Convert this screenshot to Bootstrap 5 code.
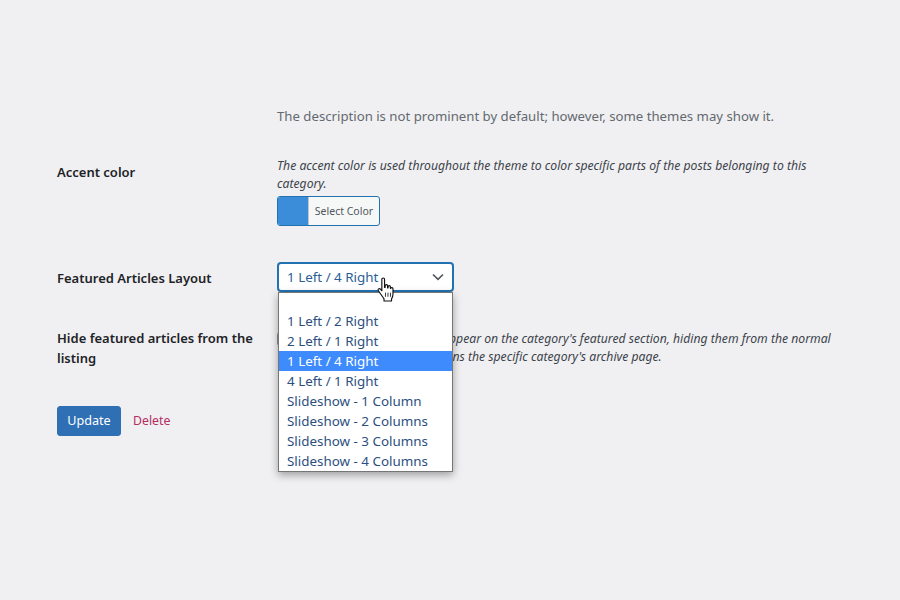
<!DOCTYPE html>
<html lang="en"><head><meta charset="utf-8"><title>Edit category</title>
<link href="https://cdn.jsdelivr.net/npm/bootstrap@5.3.0/dist/css/bootstrap.min.css" rel="stylesheet">
<style>
html,body{height:100%}
body{background:#f0f0f2;font-family:"Noto Sans","Open Sans",sans-serif;font-size:13px;color:#3c434a;overflow:hidden}
.pg{padding:107px 0 0 57px;width:900px}
.frow{display:flex}
.lbl{width:220px;flex:none;font-weight:600;color:#1d2327;font-size:13px;line-height:21px;padding-right:12px}
.desc-main{color:#646970;font-size:13.2px;line-height:18px;margin:0 0 0 220px;white-space:nowrap}
.hint{font-style:italic;font-size:12.2px;line-height:18px;color:#3c434a;margin:0;width:555px}
.r-accent{margin-top:32px}
.r-accent .lbl{padding-top:5px}
.colorbtn{display:flex;width:103px;height:30px;border:1px solid #2271b1;border-radius:3px;background:#f6f7f7;overflow:hidden;padding:1px 0 0;margin-top:3px;font-size:10.5px;color:#50575e;align-items:center}
.colorbtn .sw{width:31px;background:#3b8dd9;border-right:1px solid #c3c4c7;flex:none;margin-top:-1px;height:30px}
.colorbtn .tx{flex:1;text-align:center;white-space:nowrap}
.r-layout{margin-top:36px}
.r-layout .lbl{padding-top:6px}
.selwrap{position:relative;width:177px}
.selbox{height:30px;border:2px solid #2271b1;border-radius:4px;background:#fff;display:flex;align-items:center;justify-content:space-between;padding:0 8px 0 8px;font-size:13.4px;color:#2a5f96}
.droplist{position:absolute;top:30px;left:1px;width:175px;height:180px;background:#fff;border:1px solid #767676;box-shadow:0 3px 8px rgba(0,0,0,.35);padding:18px 0 0;margin:0;list-style:none;font-size:13.4px;line-height:20px;color:#2c4f80;z-index:5}
.droplist li{padding-left:8px;height:20px;white-space:nowrap}
.droplist li.sel{background:#3d8bfd;color:#fff}
.cursor{position:absolute;left:100px;top:15px;z-index:6}
.r-hide{margin-top:36px}
.r-hide .lbl{padding-top:0;line-height:20px}
.hidecol{display:flex;gap:9px;padding-top:2px}
.chk{width:16px;height:16px;border:1px solid #8c8f94;border-radius:4px;background:#fff;flex:none;margin-top:1px}
.r-act{margin-top:38px;display:flex;align-items:center;gap:12px}
.btn-upd{background:#2f70b4;border:1px solid #2f70b4;color:#fff;font-size:12.6px;border-radius:3px;height:30px;width:64px;padding:1px 0 0;font-family:inherit}
.lnk-del{color:#b32d5e;text-decoration:none;font-size:12.3px;padding-top:1px}
</style></head>
<body>
<main class="pg">
<p class="desc-main">The description is not prominent by default; however, some themes may show it.</p>
<div class="frow r-accent">
 <div class="lbl">Accent color</div>
 <div>
  <p class="hint">The accent color is used throughout the theme to color specific parts of the posts belonging to this category.</p>
  <button type="button" class="colorbtn"><span class="sw"></span><span class="tx">Select Color</span></button>
 </div>
</div>
<div class="frow r-layout">
 <div class="lbl">Featured Articles Layout</div>
 <div class="selwrap">
  <div class="selbox"><span>1 Left / 4 Right</span>
   <svg width="12" height="8" viewBox="0 0 12 8"><path d="M1 1.5 6 6.3 11 1.5" fill="none" stroke="#50575e" stroke-width="1.7"/></svg>
  </div>
  <ul class="droplist">
   <li>1 Left / 2 Right</li><li>2 Left / 1 Right</li><li class="sel">1 Left / 4 Right</li><li>4 Left / 1 Right</li>
   <li>Slideshow - 1 Column</li><li>Slideshow - 2 Columns</li><li>Slideshow - 3 Columns</li><li>Slideshow - 4 Columns</li>
  </ul>
  <svg class="cursor" width="18" height="25" viewBox="0 0 17 24"><path d="M4.500 2.200c0-1.600 2.600-1.600 2.600 0V10l.6.1V8.400c0-1.400 2.300-1.400 2.300 0v2l.5.1V9.300c0-1.300 2.200-1.300 2.200 0v1.600l.4.1c0-1.100 2.100-1 2.100.3v5.200c0 2-.6 3.200-1.400 4.600v1.900H6.600v-2C5 18.500 3 16 1.200 13.200c-.9-1.500.8-2.800 2-1.500l1.300 1.500z" fill="#fff" stroke="#111" stroke-width="1.100" stroke-linejoin="round"/><path d="M8 15v4M10.400 15v4M12.800 15v4" stroke="#111" stroke-width=".8"/></svg>
 </div>
</div>
<div class="frow r-hide">
 <div class="lbl">Hide featured articles from the listing</div>
 <div class="hidecol">
  <span class="chk"></span>
  <p class="hint">When checked, posts that appear on the category's featured section, hiding them from the normal listing, and that only concerns the specific category's archive page.</p>
 </div>
</div>
<div class="r-act">
 <button type="button" class="btn-upd">Update</button>
 <a href="#" class="lnk-del">Delete</a>
</div>
</main>
<script src="https://cdn.jsdelivr.net/npm/bootstrap@5.3.0/dist/js/bootstrap.bundle.min.js"></script>
</body></html>
